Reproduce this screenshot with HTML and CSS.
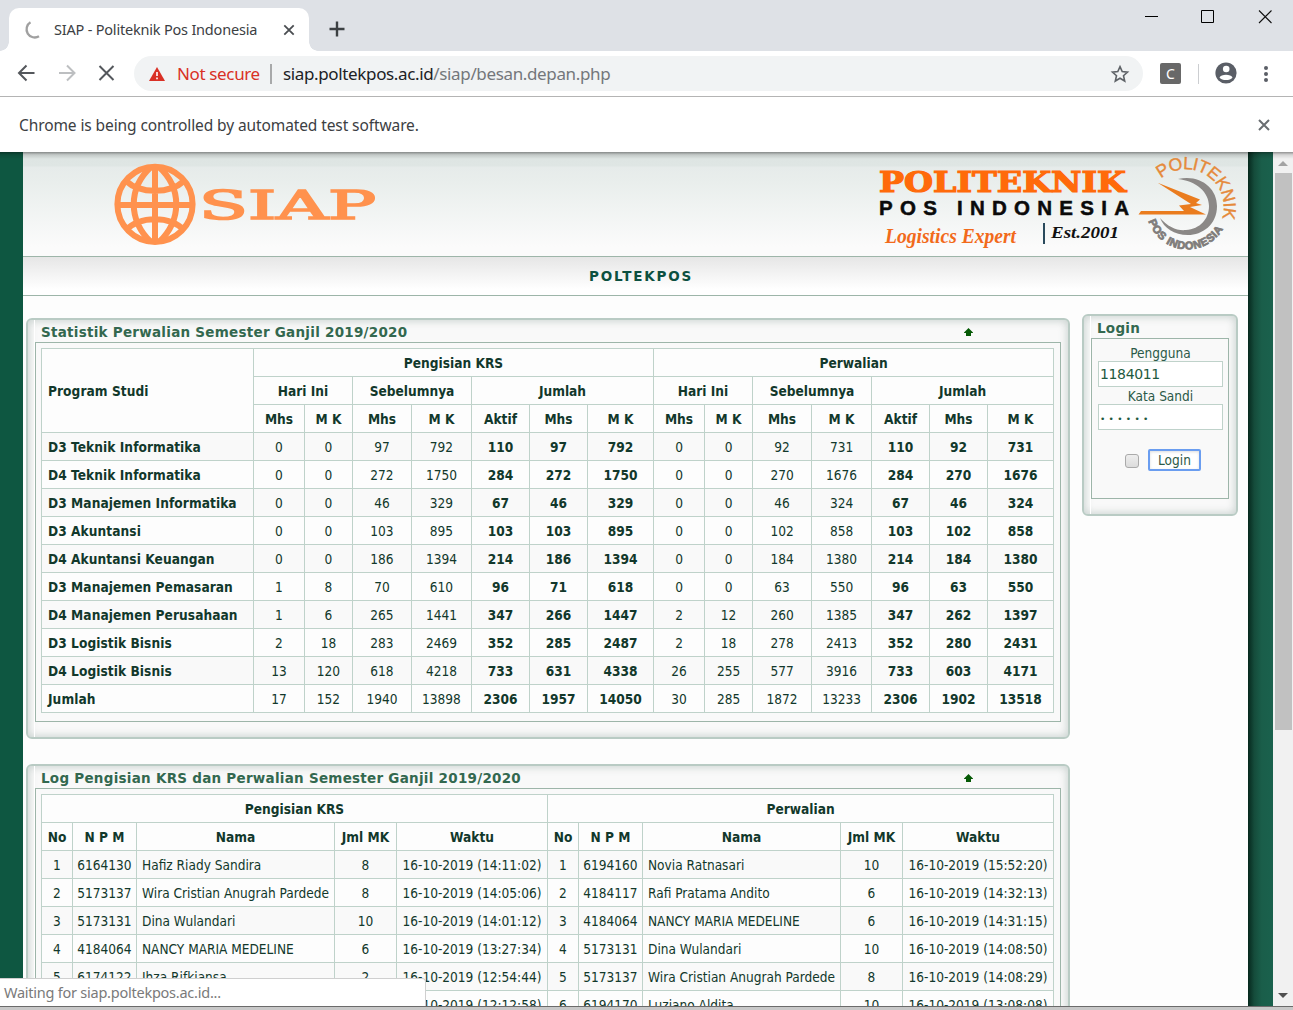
FILE: index.html
```html
<!DOCTYPE html>
<html lang="id">
<head>
<meta charset="utf-8">
<title>SIAP - Politeknik Pos Indonesia</title>
<link rel="stylesheet" href="styles.css">
</head>
<body>
<div class="window">
  <div class="tabstrip">
    <div class="tab">
      <svg class="spinner" width="20" height="20" viewBox="0 0 20 20"><path d="M8.500 2.300A8 8 0 1 0 17 16.300" fill="none" stroke="#a0a0a0" stroke-width="2.300"/></svg>
      <span class="tab-title">SIAP - Politeknik Pos Indonesia</span>
      <svg class="tab-close" width="12" height="12" viewBox="0 0 12 12"><path d="M1.300 1.300L10.700 10.700M10.700 1.300L1.300 10.700" stroke="#4a4d51" stroke-width="1.800"/></svg>
    </div>
    <svg class="newtab" width="16" height="16" viewBox="0 0 16 16"><path d="M8 .5V15.500M.5 8H15.500" stroke="#3c4043" stroke-width="2.400"/></svg>
    <svg class="controls" width="132" height="16" viewBox="0 0 132 16"><path d="M0 8.500H13" stroke="#000"/><path d="M56.500 2.500h12v12h-12z" fill="none" stroke="#000"/><path d="M114 2.500L126.500 15M126.500 2.500L114 15" stroke="#111" stroke-width="1.100"/></svg>
  </div>
  <div class="toolbar">
    <svg class="nav" width="110" height="24" viewBox="0 0 110 24" fill="none" stroke-width="2"><path d="M27 12H12M19 4.500L11.500 12L19 19.500" transform="translate(-.5)" stroke="#54575c"/><path d="M51 12H66M59 4.500L66.500 12L59 19.500" stroke="#bdbfc1"/><path d="M91.500 5L105.500 19M105.500 5L91.500 19" stroke="#54575c"/></svg>
    <div class="omnibox">
      <svg width="16" height="14" viewBox="0 0 16 14"><path d="M8 0L16 14H0z" fill="#d93025"/><path d="M8 5v4M8 10.500v1.800" stroke="#fff" stroke-width="1.600"/></svg>
      <span class="notsecure">Not secure</span>
      <span class="sep"></span>
      <span class="url">siap.poltekpos.ac.id<i>/siap/besan.depan.php</i></span>
      <svg class="star" width="20" height="20" viewBox="0 0 20 20"><path d="M10 2.700L12.200 7.600L17.500 8.200L13.500 11.700L14.700 17L10 14.200L5.300 17L6.500 11.700L2.500 8.200L7.800 7.600z" fill="none" stroke="#5f6368" stroke-width="1.600"/></svg>
    </div>
    <span class="ext">C</span>
    <span class="tool-sep"></span>
    <svg class="avatar" width="22" height="22" viewBox="0 0 22 22"><circle cx="11" cy="11" r="10.600" fill="#5a5e66"/><circle cx="11.200" cy="7" r="3.300" fill="#fff"/><path d="M4.500 15.400C6 12 16 12 17.500 15.400C15 19 7 19 4.500 15.400z" fill="#fff"/></svg>
    <svg width="6" height="18" viewBox="0 0 6 18" fill="#5a5e66"><circle cx="3" cy="3" r="2"/><circle cx="3" cy="9" r="2"/><circle cx="3" cy="15" r="2"/></svg>
  </div>
  <div class="infobar">
    <span>Chrome is being controlled by automated test software.</span>
    <svg width="12" height="12" viewBox="0 0 12 12"><path d="M1 1L11 11M11 1L1 11" stroke="#696d71" stroke-width="2"/></svg>
  </div>
  <div class="viewport">
    <div class="site">
      <header class="banner">
        <svg class="siap" width="270" height="90" viewBox="110 160 270 90">
          <g fill="none" stroke="#ff924e" stroke-width="6"><circle cx="155" cy="204.300" r="37.600"/><path d="M155 166V243M117 205H193M151 167C128 188 128 220 151 242M159 167C182 188 182 220 159 242M126 181C140 194 170 194 184 181M126 230C140 215.500 170 215.500 184 230"/></g>
          <text x="199" y="218.500" class="siap-text" textLength="177" lengthAdjust="spacingAndGlyphs">SIAP</text>
        </svg>
        <svg class="poltek" width="365" height="98" viewBox="875 155 365 98">
          <defs><path id="arc-top" d="M1161 178.500A37.800 37.800 0 0 1 1221 221"/><path id="arc-bottom" d="M1148.500 221A41 41 0 0 0 1225 225"/></defs>
          <text x="879" y="192" class="pt-name" textLength="247" lengthAdjust="spacingAndGlyphs">POLITEKNIK</text>
          <text x="879" y="214.500" class="pt-sub" textLength="250">POS INDONESIA</text>
          <text x="885" y="243" class="pt-tag" textLength="131" lengthAdjust="spacingAndGlyphs">Logistics Expert</text>
          <path d="M1044 223V244" stroke="#2a4a5c" stroke-width="2"/>
          <text x="1051" y="238" class="pt-est" textLength="68" lengthAdjust="spacingAndGlyphs">Est.2001</text>
          <path d="M1178 179C1200 174 1217 188 1217 206C1217 225 1202 235 1188 235C1174 235 1164 228 1160 218C1168 227 1177 231 1186 230C1200 229 1209 219 1209 206C1209 192 1196 181 1178 179z" fill="#8b8886"/>
          <path d="M1157.700 182.700L1200 199.500L1196 203L1202 205L1190 207L1206 214.500H1138.500L1141 211H1184L1179 205.500L1191 204z" fill="#ea7c1e"/>
          <text class="em-top"><textPath href="#arc-top" textLength="98">POLITEKNIK</textPath></text>
          <text class="em-bottom"><textPath href="#arc-bottom" textLength="94">POS INDONESIA</textPath></text>
        </svg>
      </header>
      <nav class="menu">POLTEKPOS</nav>
      <div class="columns">
        <main>
          <section class="panel">
            <h2>Statistik Perwalian Semester Ganjil 2019/2020<svg width="9" height="8" viewBox="0 0 9 8"><path d="M4.500 0L9 4.500V5H7V8H2V5H0V4.500z" fill="#065a06"/></svg></h2>
            <div class="box">
              <table class="stat">
                <colgroup><col class="w212"><col class="w51"><col class="w48"><col class="w59"><col class="w60"><col class="w58"><col class="w58"><col class="w66"><col class="w51"><col class="w48"><col class="w59"><col class="w60"><col class="w58"><col class="w58"><col class="w66"></colgroup>
                <thead>
                <tr><th rowspan="3">Program Studi</th><th colspan="7">Pengisian KRS</th><th colspan="7">Perwalian</th></tr>
                <tr><th colspan="2">Hari Ini</th><th colspan="2">Sebelumnya</th><th colspan="3">Jumlah</th><th colspan="2">Hari Ini</th><th colspan="2">Sebelumnya</th><th colspan="3">Jumlah</th></tr>
                <tr><th>Mhs</th><th>M K</th><th>Mhs</th><th>M K</th><th>Aktif</th><th>Mhs</th><th>M K</th><th>Mhs</th><th>M K</th><th>Mhs</th><th>M K</th><th>Aktif</th><th>Mhs</th><th>M K</th></tr>
                </thead>
                <tbody>
                <tr><th>D3 Teknik Informatika</th><td>0</td><td>0</td><td>97</td><td>792</td><th>110</th><th>97</th><th>792</th><td>0</td><td>0</td><td>92</td><td>731</td><th>110</th><th>92</th><th>731</th></tr>
                <tr><th>D4 Teknik Informatika</th><td>0</td><td>0</td><td>272</td><td>1750</td><th>284</th><th>272</th><th>1750</th><td>0</td><td>0</td><td>270</td><td>1676</td><th>284</th><th>270</th><th>1676</th></tr>
                <tr><th>D3 Manajemen Informatika</th><td>0</td><td>0</td><td>46</td><td>329</td><th>67</th><th>46</th><th>329</th><td>0</td><td>0</td><td>46</td><td>324</td><th>67</th><th>46</th><th>324</th></tr>
                <tr><th>D3 Akuntansi</th><td>0</td><td>0</td><td>103</td><td>895</td><th>103</th><th>103</th><th>895</th><td>0</td><td>0</td><td>102</td><td>858</td><th>103</th><th>102</th><th>858</th></tr>
                <tr><th>D4 Akuntansi Keuangan</th><td>0</td><td>0</td><td>186</td><td>1394</td><th>214</th><th>186</th><th>1394</th><td>0</td><td>0</td><td>184</td><td>1380</td><th>214</th><th>184</th><th>1380</th></tr>
                <tr><th>D3 Manajemen Pemasaran</th><td>1</td><td>8</td><td>70</td><td>610</td><th>96</th><th>71</th><th>618</th><td>0</td><td>0</td><td>63</td><td>550</td><th>96</th><th>63</th><th>550</th></tr>
                <tr><th>D4 Manajemen Perusahaan</th><td>1</td><td>6</td><td>265</td><td>1441</td><th>347</th><th>266</th><th>1447</th><td>2</td><td>12</td><td>260</td><td>1385</td><th>347</th><th>262</th><th>1397</th></tr>
                <tr><th>D3 Logistik Bisnis</th><td>2</td><td>18</td><td>283</td><td>2469</td><th>352</th><th>285</th><th>2487</th><td>2</td><td>18</td><td>278</td><td>2413</td><th>352</th><th>280</th><th>2431</th></tr>
                <tr><th>D4 Logistik Bisnis</th><td>13</td><td>120</td><td>618</td><td>4218</td><th>733</th><th>631</th><th>4338</th><td>26</td><td>255</td><td>577</td><td>3916</td><th>733</th><th>603</th><th>4171</th></tr>
                <tr><th>Jumlah</th><td>17</td><td>152</td><td>1940</td><td>13898</td><th>2306</th><th>1957</th><th>14050</th><td>30</td><td>285</td><td>1872</td><td>13233</td><th>2306</th><th>1902</th><th>13518</th></tr>
                </tbody>
              </table>
            </div>
          </section>
          <section class="panel">
            <h2>Log Pengisian KRS dan Perwalian Semester Ganjil 2019/2020<svg width="9" height="8" viewBox="0 0 9 8"><path d="M4.500 0L9 4.500V5H7V8H2V5H0V4.500z" fill="#065a06"/></svg></h2>
            <div class="box">
              <table class="log">
                <colgroup><col class="w31"><col class="w64"><col class="w198"><col class="w62"><col class="w151"><col class="w31"><col class="w64"><col class="w198"><col class="w62"><col class="w151"></colgroup>
                <thead>
                <tr><th colspan="5">Pengisian KRS</th><th colspan="5">Perwalian</th></tr>
                <tr><th>No</th><th>N P M</th><th>Nama</th><th>Jml MK</th><th>Waktu</th><th>No</th><th>N P M</th><th>Nama</th><th>Jml MK</th><th>Waktu</th></tr>
                </thead>
                <tbody>
                <tr><td>1</td><td>6164130</td><td class="name">Hafiz Riady Sandira</td><td>8</td><td>16-10-2019 (14:11:02)</td><td>1</td><td>6194160</td><td class="name">Novia Ratnasari</td><td>10</td><td>16-10-2019 (15:52:20)</td></tr>
                <tr><td>2</td><td>5173137</td><td class="name">Wira Cristian Anugrah Pardede</td><td>8</td><td>16-10-2019 (14:05:06)</td><td>2</td><td>4184117</td><td class="name">Rafi Pratama Andito</td><td>6</td><td>16-10-2019 (14:32:13)</td></tr>
                <tr><td>3</td><td>5173131</td><td class="name">Dina Wulandari</td><td>10</td><td>16-10-2019 (14:01:12)</td><td>3</td><td>4184064</td><td class="name">NANCY MARIA MEDELINE</td><td>6</td><td>16-10-2019 (14:31:15)</td></tr>
                <tr><td>4</td><td>4184064</td><td class="name">NANCY MARIA MEDELINE</td><td>6</td><td>16-10-2019 (13:27:34)</td><td>4</td><td>5173131</td><td class="name">Dina Wulandari</td><td>10</td><td>16-10-2019 (14:08:50)</td></tr>
                <tr><td>5</td><td>6174122</td><td class="name">Ihza Rifkiansa</td><td>2</td><td>16-10-2019 (12:54:44)</td><td>5</td><td>5173137</td><td class="name">Wira Cristian Anugrah Pardede</td><td>8</td><td>16-10-2019 (14:08:29)</td></tr>
                <tr><td></td><td></td><td></td><td></td><td>16-10-2019 (12:12:58)</td><td>6</td><td>6194170</td><td class="name">Luziano Aldita</td><td>10</td><td>16-10-2019 (13:08:08)</td></tr>
                </tbody>
              </table>
            </div>
          </section>
        </main>
        <aside class="panel">
          <h2>Login</h2>
          <form class="box login">
            <label>Pengguna</label>
            <div class="field">1184011</div>
            <label>Kata Sandi</label>
            <div class="field dots">••••••</div>
            <div class="actions"><span class="check"></span><span class="btn">Login</span></div>
          </form>
        </aside>
      </div>
    </div>
    <div class="edge"></div>
    <div class="scrollbar"><i class="up"></i><div class="thumb"></div><i class="down"></i></div>
    <div class="shade"></div>
    <div class="status">Waiting for siap.poltekpos.ac.id...</div>
  </div>
</div>
</body>
</html>
```
FILE: styles.css
```css
* { box-sizing: border-box; }
body { margin: 0; overflow: hidden; }
.window {
  width: 1293px; height: 1010px; display: flex; flex-direction: column;
  background: #c8c8c8; font-family: "Noto Sans", sans-serif; color: #3c4043;
}
svg { display: block; flex: none; }

/* browser frame */
.tabstrip { height: 51px; background: #dee1e6; display: flex; padding: 8px 0 0 9px; }
.tab {
  position: relative; width: 300px; height: 43px; background: #fff; border-radius: 10px 10px 0 0;
  display: flex; align-items: center; padding-left: 13px; flex: none;
}
.tab::before, .tab::after {
  content: ""; position: absolute; bottom: 0; width: 9px; height: 9px;
}
.tab::before { left: -9px; background: radial-gradient(circle at 0 0, transparent 8.500px, #fff 9px); }
.tab::after { right: -9px; background: radial-gradient(circle at 100% 0, transparent 8.500px, #fff 9px); }
.tab-title { margin-left: 12px; padding-bottom: 2px; width: 229px; font-size: 14.500px; letter-spacing: -.2px; white-space: nowrap; }
.newtab { margin: 13px 0 0 20px; }
.controls { margin: 0 16px 0 auto; }
.toolbar { height: 46px; background: #fff; border-bottom: 1px solid #b4b4b4; display: flex; align-items: center; }
.nav { margin-left: 8px; margin-top: -1px; }
.omnibox {
  margin-left: 16px; width: 1009px; height: 35px; border-radius: 18px; background: #f1f3f4;
  display: flex; align-items: center; padding: 0 13px 0 15px; font-size: 17px; letter-spacing: -.36px; white-space: nowrap;
}
.notsecure { margin-left: 12px; width: 85px; color: #d93025; }
.sep { width: 2px; height: 20px; margin: 0 11px 0 8px; background: #a8a9aa; }
.url { color: #202124; }
.url i { font-style: normal; color: #74777b; }
.star { margin-left: auto; }
.ext {
  width: 21px; height: 21px; margin-left: 17px; background: #686868; border-radius: 2px;
  color: #fff; font-size: 14px; line-height: 21px; text-align: center;
}
.tool-sep { width: 1px; height: 20px; margin: 0 17px; background: #ccced1; }
.avatar { margin: -1px 26px 0 -1px; }
.infobar {
  height: 55px; background: #fff; display: flex; justify-content: space-between;
  align-items: center; padding: 0 23px 0 19px; font-size: 15.500px; letter-spacing: -.1px;
}

/* page viewport */
.viewport {
  position: relative; height: 855px; border-bottom: 1px solid #6b6b6b; overflow: hidden;
  background: #0e5741; display: flex; padding-left: 23px;
  font-family: "DejaVu Sans Condensed", "DejaVu Sans", sans-serif; font-stretch: condensed;
  font-size: 13.550px; color: #12382b;
}
.site { width: 1225px; background: #fdfdfd; }
.edge { width: 25px; background: linear-gradient(90deg, #06281d, #154c3b 25%, #1a5e4a 55%, #1a614d); }
.shade {
  position: absolute; left: 0; right: 0; top: 0; height: 7px;
  background: linear-gradient(rgba(0,0,0,.4), rgba(0,0,0,.12) 40%, transparent);
}
.scrollbar {
  width: 20px; background: #f1f1f1; display: flex; flex-direction: column; align-items: center;
  padding: 9px 0 8px;
}
.thumb { width: 17px; height: 557px; margin: 7px 0 auto 1px; background: #c1c1c1; }
.up, .down { border: 5px solid transparent; border-top: 0; border-bottom-color: #a3a3a3; }
.down { border-bottom: 0; border-top: 5px solid #505050; }
.status {
  position: absolute; left: 0; bottom: 0; width: 426px; height: 28px; background: #fff;
  border: 1px solid #cfcfcf; border-left: 0; border-bottom: 0; border-radius: 0 4px 0 0;
  padding-left: 4px; font: 14.500px/26px "Noto Sans", sans-serif; letter-spacing: -.24px; color: #7a7a7a;
}

/* banner and menu */
.banner {
  height: 105px; display: flex; justify-content: space-between; padding: 3px 8px 0 87px;
  border-bottom: 1px solid #9db5a9;
  background: linear-gradient(#dde4e2 0, #dfe6e4 14px, #e6ebea 15px, #e9eeec 30px, #fbfbfb 95px);
}
.siap { margin-top: 5px; }
.siap-text { font: 38.500px "DejaVu Serif", serif; font-stretch: normal; fill: #ff924e; stroke: #ff924e; stroke-width: 1.600; }
.pt-name { font: bold 28px "DejaVu Serif", serif; fill: #ff6a0a; stroke: #ff6a0a; stroke-width: 1.200; }
.pt-sub { font: bold 20.500px "Liberation Sans", sans-serif; fill: #0a0a0a; stroke: #0a0a0a; stroke-width: .5; }
.pt-tag { font: italic bold 21px "Liberation Serif", serif; fill: #f26a1b; }
.pt-est { font: italic bold 17px "Liberation Serif", serif; fill: #111; }
.em-top { font: 17.500px "Liberation Sans", sans-serif; fill: #e58a3a; stroke: #e58a3a; stroke-width: .4; }
.em-bottom { font: bold 11px "Liberation Sans", sans-serif; fill: #7f7c7a; stroke: #7f7c7a; stroke-width: .8; }
.menu {
  height: 39px; border-bottom: 1px solid #9db5a9; background: linear-gradient(#e6e6e6, #fff 85%);
  padding-left: 11px; text-align: center; font: bold 13.500px/38px "DejaVu Sans", sans-serif;
  font-stretch: normal; letter-spacing: 1.800px; color: #0c5040;
}

/* panels */
.columns { display: flex; align-items: flex-start; gap: 12px; padding: 18px 10px 0 3px; }
main { width: 1044px; padding-top: 4px; }
.panel {
  position: relative; border: 2px solid #b9cbc4; border-radius: 6px; background: #f9f9f9;
  box-shadow: inset 0 0 10px rgba(80,110,100,.33); padding: 1px 7px 16px;
}
.panel::before { content: ""; position: absolute; left: 6px; top: 0; bottom: 0; width: 1px; background: #fff; }
main .panel { height: 421px; margin-bottom: 25px; }
aside.panel { width: 157px; height: 202px; }
h2 {
  display: flex; align-items: center; height: 21px; margin: 0; padding: 1px 0 0 6px;
  font: bold 13.500px/20px "DejaVu Sans", sans-serif; font-stretch: normal; letter-spacing: .26px; color: #33684f; white-space: nowrap;
}
h2 svg { margin: 0 88px 0 auto; }
.box { border: 1px solid #9db5a9; background: #f9f9f9; padding: 5px; height: 380px; }
main .box { width: 1026px; }
table { table-layout: fixed; border-collapse: collapse; width: 1013px; }
tr { height: 28px; }
th, td { border: 1px solid #bfd2ca; padding: 0; text-align: center; white-space: nowrap; line-height: 20px; }
td { padding-top: 1px; line-height: 21px; }
th { font-size: 13.600px; }
thead tr, tbody tr:nth-child(even) { background: #fdfdfd; }
tbody tr:nth-child(odd) { background: #f9f9f9; }
.stat tr > th:first-child[rowspan], .stat tbody th:first-child { text-align: left; padding-left: 6px; letter-spacing: .06px; }
.name { text-align: left; padding-left: 5px; }
.w212 { width: 212px; } .w51 { width: 51px; } .w48 { width: 48px; } .w59 { width: 59px; }
.w60 { width: 60px; } .w58 { width: 58px; } .w66 { width: 66px; }
.w31 { width: 31px; } .w64 { width: 64px; } .w198 { width: 198px; } .w62 { width: 62px; } .w151 { width: 151px; }

/* login */
.login { width: 138px; height: 161px; padding: 5px 5px 0 6px; color: #2c5a48; }
.login label { display: block; text-align: center; height: 17px; line-height: 19px; }
.field {
  height: 26px; border: 1px solid #bfd2ca; background: #fff; padding-left: 1px;
  font: 14px/24px "DejaVu Sans", sans-serif; letter-spacing: -.35px; color: #1f5a40;
}
.dots { font-size: 9px; line-height: 28px; letter-spacing: 3.300px; padding-left: 1px; }
.actions { display: flex; align-items: center; margin: 19px 0 0 27px; }
.check { width: 14px; height: 14px; margin-top: 1px; border: 1px solid #aaa; border-radius: 3px; background: linear-gradient(#eee, #dcdcdc); }
.btn {
  width: 53px; height: 22px; margin-left: 9px; border: 2px solid #6a9df0; border-radius: 2px; background: #fff;
  text-align: center; line-height: 19px; color: #2c5a48; box-shadow: inset 0 1px 3px #ddd;
}
```
